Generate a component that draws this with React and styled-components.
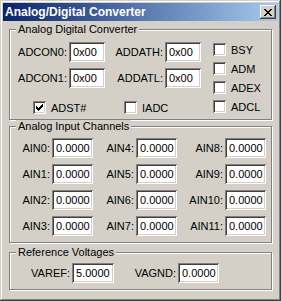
import React from "react";
import styled, { createGlobalStyle } from "styled-components";

const GlobalStyle = createGlobalStyle`
  html, body {
    margin: 0;
    padding: 0;
    background: #d4d0c8;
  }
  * {
    box-sizing: border-box;
  }
`;

const Window = styled.div`
  width: 281px;
  height: 301px;
  padding: 3px;
  background: #d4d0c8;
  display: flex;
  flex-direction: column;
  font-family: "Liberation Sans", Arial, sans-serif;
  font-size: 11px;
  color: #000;
  box-shadow: inset -1px -1px #404040, inset 1px 1px #d4d0c8,
    inset -2px -2px #808080, inset 2px 2px #fff;
`;

const TitleBar = styled.div`
  height: 18px;
  flex: none;
  display: flex;
  align-items: center;
  justify-content: space-between;
  padding: 0 2px;
  background: linear-gradient(to right, #0a246a, #a6caf0);
`;

const Title = styled.span`
  color: #fff;
  font-weight: bold;
  font-size: 12px;
  line-height: 18px;
  white-space: nowrap;
`;

const CloseButton = styled.button`
  width: 16px;
  height: 14px;
  padding: 0;
  border: none;
  background: #d4d0c8;
  display: flex;
  align-items: center;
  justify-content: center;
  box-shadow: inset -1px -1px #404040, inset 1px 1px #fff,
    inset -2px -2px #808080, inset 2px 2px #d4d0c8;
`;

const Body = styled.div`
  flex: 1;
  padding: 8px 6px 0;
  display: flex;
  flex-direction: column;
`;

const Group = styled.div`
  position: relative;
  height: ${(p) => p.$h}px;
  margin-top: ${(p) => p.$mt || 0}px;
  padding-top: ${(p) => p.$pt}px;
  border: 1px solid #808080;
  box-shadow: inset 1px 1px #fff, 1px 1px #fff;
`;

const Legend = styled.span`
  position: absolute;
  top: -7px;
  left: 6px;
  padding: 0 2px;
  line-height: 13px;
  background: #d4d0c8;
  white-space: nowrap;
`;

const Field = styled.div`
  display: flex;
  align-items: center;
  justify-content: flex-end;
  gap: 2px;
  white-space: nowrap;
`;

const Input = styled.input`
  width: ${(p) => p.$w}px;
  height: 20px;
  padding: 0 0 0 4px;
  margin: 0;
  border: none;
  outline: none;
  background: #fff;
  font-family: "Liberation Sans", Arial, sans-serif;
  font-size: 11px;
  color: #000;
  box-shadow: inset 1px 1px #808080, inset -1px -1px #fff,
    inset 2px 2px #404040, inset -2px -2px #d4d0c8;
`;

const AdcTop = styled.div`
  display: flex;
`;

const RegGrid = styled.div`
  display: grid;
  grid-template-columns: 95px 96px;
  row-gap: 6px;
  align-content: start;
  padding-top: 12px;
`;

const CheckColumn = styled.div`
  display: flex;
  flex-direction: column;
  gap: 6px;
  padding: 13px 0 0 12px;
`;

const CheckRow = styled.div`
  display: flex;
  padding: ${(p) => p.$pad};
`;

const Check = styled.label`
  display: flex;
  align-items: center;
  gap: 5px;
  width: ${(p) => (p.$w ? `${p.$w}px` : "auto")};
  height: 13px;
  white-space: nowrap;
`;

const Box = styled.span`
  width: 13px;
  height: 13px;
  flex: none;
  background: #fff;
  display: flex;
  align-items: center;
  justify-content: center;
  box-shadow: inset 1px 1px #808080, inset -1px -1px #fff,
    inset 2px 2px #404040, inset -2px -2px #d4d0c8;
`;

const ChannelGrid = styled.div`
  display: grid;
  grid-template-columns: 83px 84px 89px;
  row-gap: 6px;
`;

const VoltGrid = styled.div`
  display: grid;
  grid-template-columns: 104px 105px;
`;

const CheckBox = ({ label, checked, w }) => (
  <Check $w={w}>
    <Box>
      {checked && (
        <svg width="7" height="7" viewBox="0 0 7 7" shapeRendering="crispEdges">
          <path
            d="M6 0h1v3h-1v1h-1v1h-1v1h-1v1h-1v-1h-1v-1h-1v-3h1v1h1v1h1v-1h1v-1h1z"
            fill="#000"
          />
        </svg>
      )}
    </Box>
    {label}
  </Check>
);

const CloseGlyph = () => (
  <svg width="8" height="7" viewBox="0 0 8 7" shapeRendering="crispEdges">
    <path
      d="M0 0h2v1h1v1h2v-1h1v-1h2v1h-1v1h-1v1h-1v1h1v1h1v1h1v1h-2v-1h-1v-1h-2v1h-1v1h-2v-1h1v-1h1v-1h1v-1h-1v-1h-1v-1h-1z"
      fill="#000"
    />
  </svg>
);

const channels = [
  ["AIN0", "AIN4", "AIN8"],
  ["AIN1", "AIN5", "AIN9"],
  ["AIN2", "AIN6", "AIN10"],
  ["AIN3", "AIN7", "AIN11"],
];

export default function App() {
  return (
    <>
      <GlobalStyle />
      <Window>
        <TitleBar>
          <Title>Analog/Digital Converter</Title>
          <CloseButton aria-label="Close">
            <CloseGlyph />
          </CloseButton>
        </TitleBar>
        <Body>
          <Group $h={91} $pt={0}>
            <Legend>Analog Digital Converter</Legend>
            <AdcTop>
              <div>
                <RegGrid>
                  <Field>
                    ADCON0:
                    <Input $w={36} readOnly defaultValue="0x00" />
                  </Field>
                  <Field>
                    ADDATH:
                    <Input $w={36} readOnly defaultValue="0x00" />
                  </Field>
                  <Field>
                    ADCON1:
                    <Input $w={36} readOnly defaultValue="0x00" />
                  </Field>
                  <Field>
                    ADDATL:
                    <Input $w={36} readOnly defaultValue="0x00" />
                  </Field>
                </RegGrid>
                <CheckRow $pad="13px 0 0 23px">
                  <CheckBox label="ADST#" checked w={91} />
                  <CheckBox label="IADC" />
                </CheckRow>
              </div>
              <CheckColumn>
                <CheckBox label="BSY" />
                <CheckBox label="ADM" />
                <CheckBox label="ADEX" />
                <CheckBox label="ADCL" />
              </CheckColumn>
            </AdcTop>
          </Group>

          <Group $h={117} $mt={6} $pt={11}>
            <Legend>Analog Input Channels</Legend>
            <ChannelGrid>
              {channels.flat().map((name) => (
                <Field key={name}>
                  {name}:
                  <Input $w={41} readOnly defaultValue="0.0000" />
                </Field>
              ))}
            </ChannelGrid>
          </Group>

          <Group $h={38} $mt={9} $pt={10}>
            <Legend>Reference Voltages</Legend>
            <VoltGrid>
              <Field>
                VAREF:
                <Input $w={42} readOnly defaultValue="5.0000" />
              </Field>
              <Field>
                VAGND:
                <Input $w={41} readOnly defaultValue="0.0000" />
              </Field>
            </VoltGrid>
          </Group>
        </Body>
      </Window>
    </>
  );
}
